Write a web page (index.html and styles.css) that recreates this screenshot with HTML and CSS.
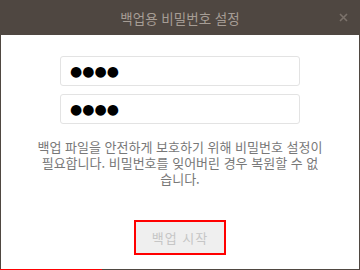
FILE: index.html
```html
<!DOCTYPE html>
<html lang="ko">
<head>
<meta charset="utf-8">
<link rel="stylesheet" href="styles.css">
</head>
<body>
<div class="window">
  <div class="titlebar">
    <span class="title">백업용 비밀번호 설정</span>
    <span class="close">
      <svg width="9" height="9" viewBox="0 0 9 9"><path d="M1 1L8 8M8 1L1 8" stroke="#7b726b" stroke-width="1.6" fill="none"/></svg>
    </span>
  </div>
  <div class="body">
    <div class="fields">
      <div class="field"><span class="dots">●●●●</span></div>
      <div class="field"><span class="dots">●●●●</span></div>
    </div>
    <p class="desc">백업 파일을 안전하게 보호하기 위해 비밀번호 설정이<br>필요합니다. 비밀번호를 잊어버린 경우 복원할 수 없<br>습니다.</p>
    <div class="actions">
      <button class="btn">백업 시작</button>
    </div>
  </div>
  <div class="bottom"><div class="progress" style="width:102px"></div></div>
</div>
</body>
</html>
```
FILE: styles.css
```css
html, body { margin: 0; padding: 0; }
body {
  width: 360px;
  height: 270px;
  overflow: hidden;
  font-family: "Noto Sans CJK KR", "Noto Sans", sans-serif;
  background: #fff;
}
.window {
  width: 360px;
  height: 270px;
  display: flex;
  flex-direction: column;
  box-sizing: border-box;
}
.titlebar {
  height: 35px;
  background: #4f4741;
  display: flex;
  align-items: center;
  justify-content: center;
  position: relative;
  flex: none;
}
.title {
  color: #a69d95;
  font-size: 13.5px;
}
.close {
  position: absolute;
  right: 12px;
  top: 13px;
  display: flex;
}
.body {
  flex: 1;
  border-left: 1px solid #4f4741;
  border-right: 1px solid #4f4741;
  display: flex;
  flex-direction: column;
  align-items: center;
}
.fields {
  margin-top: 21px;
  display: flex;
  flex-direction: column;
  gap: 8px;
}
.field {
  width: 240px;
  height: 30px;
  box-sizing: border-box;
  border: 1px solid #e3e3e3;
  border-radius: 3px;
  display: flex;
  align-items: center;
  padding-left: 9px;
}
.dots {
  font-family: "DejaVu Sans", sans-serif;
  font-size: 14px;
  line-height: 16px;
  color: #000;
}
.desc {
  margin: 15px 0 0;
  text-align: center;
  color: #787878;
  font-size: 13px;
  line-height: 16px;
}
.actions {
  margin-top: 33px;
  display: flex;
  justify-content: center;
}
.btn {
  width: 92px;
  height: 35px;
  box-sizing: border-box;
  border: 2px solid #ff0000;
  background: #efefef;
  color: #c6c6c6;
  font-family: "Noto Sans CJK KR", sans-serif;
  font-size: 13px;
  letter-spacing: 1px;
  padding: 0;
}
.bottom {
  height: 1px;
  background: #4f4741;
  flex: none;
}
.progress {
  height: 1px;
  background: #ff0000;
}
```
